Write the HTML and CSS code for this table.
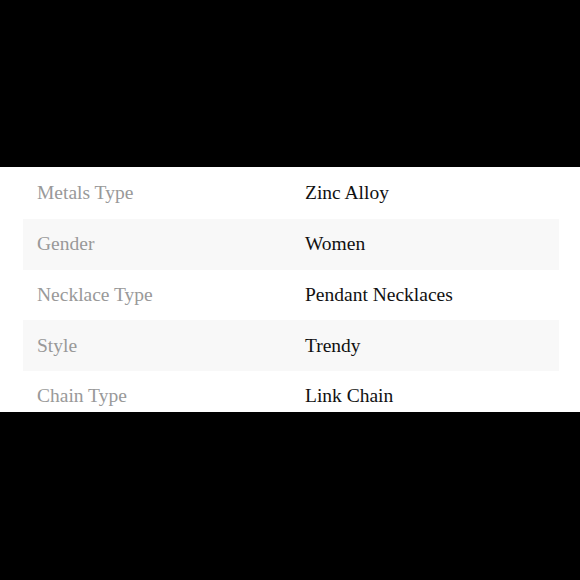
FILE: index.html
```html
<!DOCTYPE html>
<html>
<head>
<meta charset="utf-8">
<link rel="stylesheet" href="styles.css">
</head>
<body>
<section class="sheet">
  <div class="specs">
    <div class="row"><span class="label">Metals Type</span><span class="value">Zinc Alloy</span></div>
    <div class="row alt"><span class="label">Gender</span><span class="value">Women</span></div>
    <div class="row"><span class="label">Necklace Type</span><span class="value">Pendant Necklaces</span></div>
    <div class="row alt"><span class="label">Style</span><span class="value">Trendy</span></div>
    <div class="row"><span class="label">Chain Type</span><span class="value">Link Chain</span></div>
  </div>
</section>
</body>
</html>
```
FILE: styles.css
```css
html, body {
  margin: 0;
  padding: 0;
  background: #000;
  height: 580px;
  overflow: hidden;
}
.sheet {
  margin-top: 167px;
  height: 245px;
  background: #fff;
  overflow: hidden;
  padding-top: 1px;
  box-sizing: border-box;
}
.specs {
  margin-left: 23px;
  width: 536px;
  font-family: "Liberation Serif", "Times New Roman", serif;
  font-size: 19.5px;
}
.row {
  display: grid;
  grid-template-columns: 282px 1fr;
  height: 50.75px;
  align-items: center;
}
.row.alt {
  background: #f8f8f8;
}
.label {
  padding-left: 14px;
  color: #999;
}
.value {
  color: #111;
}
```
